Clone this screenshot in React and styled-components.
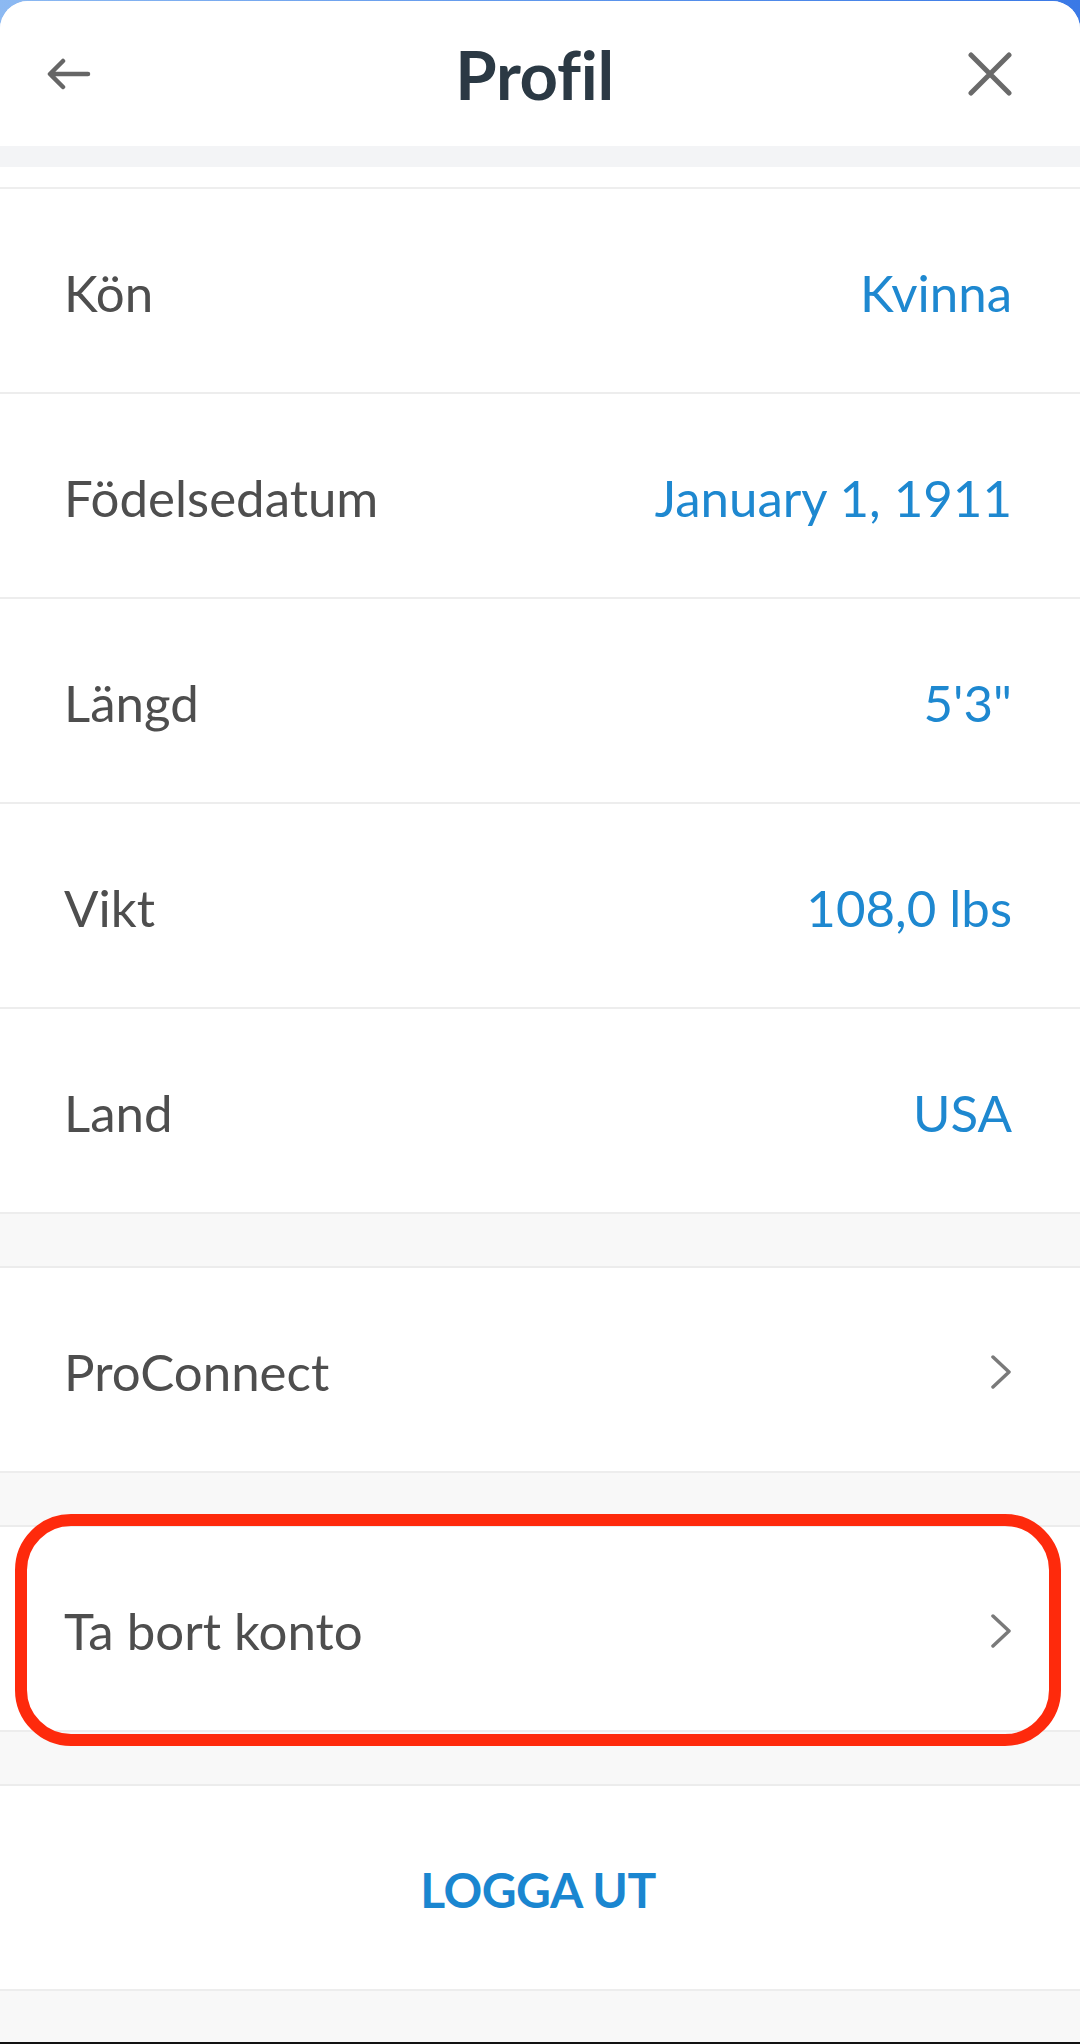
import React from "react";
import styled, { createGlobalStyle } from "styled-components";

const GlobalStyle = createGlobalStyle`
  html, body {
    margin: 0;
    padding: 0;
  }
  body {
    font-family: Lato, "Open Sans", "Liberation Sans", sans-serif;
    -webkit-font-smoothing: antialiased;
  }
`;

const rows = [
  { label: "Kön", value: "Kvinna" },
  { label: "Födelsedatum", value: "January 1, 1911" },
  { label: "Längd", value: "5'3\"" },
  { label: "Vikt", value: "108,0 lbs" },
  { label: "Land", value: "USA" },
];

const BackIcon = () => (
  <svg width="44" height="34" viewBox="0 0 44 34" fill="none">
    <path
      d="M41 17H4M16 4L3 17l13 13"
      stroke="#666"
      strokeWidth="4.5"
      strokeLinecap="round"
      strokeLinejoin="round"
    />
  </svg>
);

const CloseIcon = () => (
  <svg width="44" height="44" viewBox="0 0 44 44" fill="none">
    <path
      d="M3 3l38 38M41 3L3 41"
      stroke="#6a6a6a"
      strokeWidth="5"
      strokeLinecap="round"
    />
  </svg>
);

const Chevron = () => (
  <svg width="22" height="34" viewBox="0 0 22 34" fill="none">
    <path
      d="M3 2l16 15L3 32"
      stroke="#7a7a7a"
      strokeWidth="3.5"
      strokeLinecap="round"
      strokeLinejoin="round"
    />
  </svg>
);

const App = () => {
  return (
    <>
      <GlobalStyle />
      <Page>
        <Sheet>
          <Header>
            <IconButton>
              <BackIcon />
            </IconButton>
            <Title>Profil</Title>
            <IconButton $right>
              <CloseIcon />
            </IconButton>
          </Header>
          <HeaderShade />

          <List>
            <PartialRow />
            {rows.map((r) => (
              <Row key={r.label}>
                <Label>{r.label}</Label>
                <Value>{r.value}</Value>
              </Row>
            ))}
          </List>

          <SectionGap />
          <Row>
            <Label>ProConnect</Label>
            <Chevron />
          </Row>

          <SectionGap />
          <HighlightWrap>
            <Row>
              <Label>Ta bort konto</Label>
              <Chevron />
            </Row>
            <Highlight />
          </HighlightWrap>

          <SectionGap />
          <Row $center>
            <Logout>LOGGA UT</Logout>
          </Row>
          <BottomFill />
        </Sheet>
      </Page>
    </>
  );
};

export default App;

const Page = styled.div`
  width: 1080px;
  height: 2044px;
  background: linear-gradient(90deg, #8cb9f2 0%, #5f97ec 50%, #3a79e6 100%);
  padding-top: 1px;
  box-sizing: border-box;
  overflow: hidden;
`;

const Sheet = styled.div`
  display: flex;
  flex-direction: column;
  height: 2043px;
  background: #f8f8f8;
  border-radius: 28px 28px 0 0;
  overflow: hidden;
  border-bottom: 2px solid #111;
  box-sizing: border-box;
`;

const Header = styled.header`
  display: grid;
  grid-template-columns: 1fr auto 1fr;
  align-items: center;
  height: 145px;
  padding: 0 68px 0 47px;
  background: #fff;
`;

const IconButton = styled.div`
  display: flex;
  justify-content: ${(p) => (p.$right ? "flex-end" : "flex-start")};
  align-items: center;
`;

const Title = styled.h1`
  margin: 0 0 0 10px;
  font-size: 67px;
  font-weight: 700;
  color: #2b3944;
  font-variant-ligatures: none;
  letter-spacing: -0.3px;
`;

const HeaderShade = styled.div`
  height: 21px;
  background: #f3f4f6;
`;

const List = styled.div`
  display: flex;
  flex-direction: column;
  background: #fff;
`;

const PartialRow = styled.div`
  height: 22px;
  box-sizing: border-box;
  border-bottom: 2px solid #eeeeee;
  background: #fff;
`;

const Row = styled.div`
  display: flex;
  align-items: center;
  justify-content: ${(p) => (p.$center ? "center" : "space-between")};
  height: 205px;
  box-sizing: border-box;
  padding: 4px 68px 0 64px;
  background: #fff;
  border-bottom: 2px solid #ededed;
`;

const Label = styled.span`
  font-size: 51px;
  color: #4e4e4e;
`;

const Value = styled.span`
  font-size: 51px;
  color: #1e88d0;
`;

const SectionGap = styled.div`
  height: 54px;
  background: #f8f8f8;
  border-bottom: 2px solid #ececec;
  box-sizing: border-box;
`;

const HighlightWrap = styled.div`
  position: relative;
`;

const Highlight = styled.div`
  position: absolute;
  top: -13px;
  bottom: -14px;
  left: 15px;
  right: 19px;
  border: 12px solid #fe2a0c;
  border-radius: 56px;
  pointer-events: none;
`;

const Logout = styled.span`
  font-size: 48px;
  font-weight: 700;
  color: #1a86d0;
  letter-spacing: -0.5px;
`;

const BottomFill = styled.div`
  flex: 1;
  background: #f8f8f8;
`;
